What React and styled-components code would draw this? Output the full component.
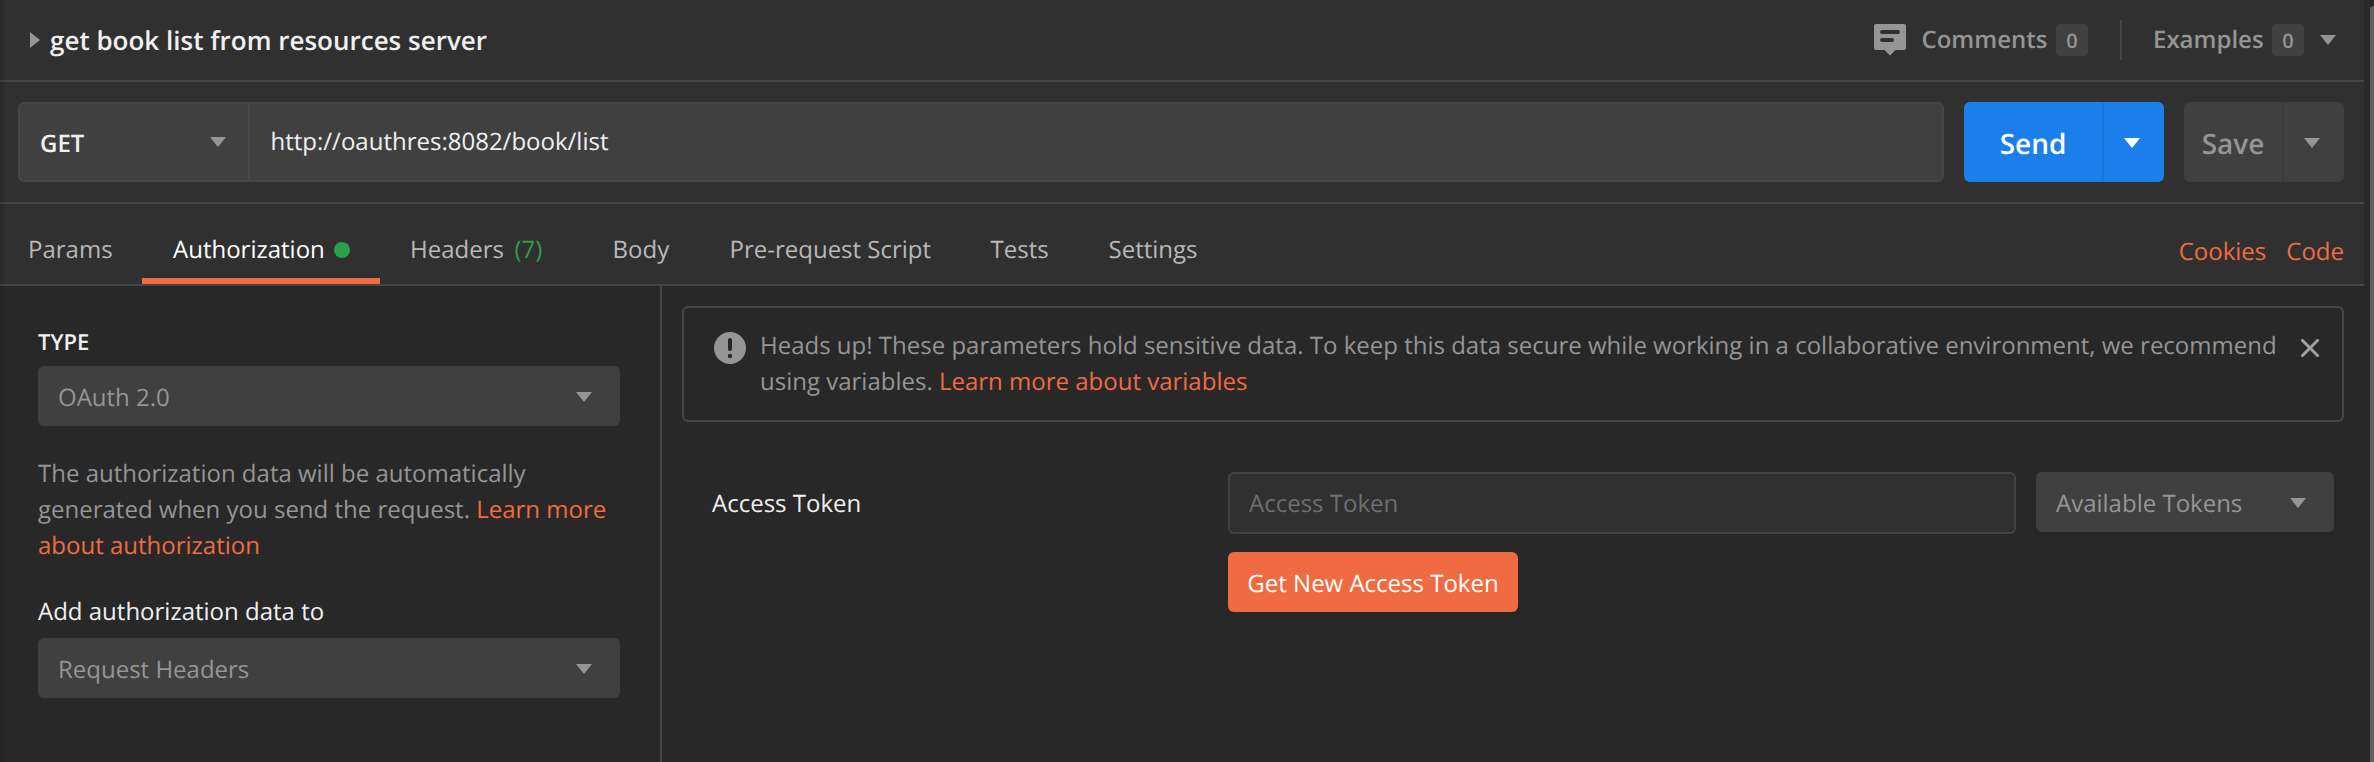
import React from 'react';
import styled, { createGlobalStyle } from 'styled-components';

const c = {
  body: '#282828',
  bar: '#303030',
  line: '#464646',
  fill: '#404040',
  orange: '#f16b42',
  blue: '#1b7feb',
  green: '#2c9d4a',
  muted: '#959595',
  tab: '#b8b8b8',
  text: '#f0f0f0',
};

const GlobalStyle = createGlobalStyle`
  *, *::before, *::after { box-sizing: border-box; }
  body {
    margin: 0;
    background: ${c.body};
    font-family: "Open Sans", "Noto Sans", sans-serif;
    font-size: 24px;
    line-height: 36px;
    color: ${c.text};
    text-rendering: geometricPrecision;
    -webkit-font-smoothing: antialiased;
    overflow: hidden;
  }
  button, input { font: inherit; text-rendering: inherit; }
`;

const Page = styled.div`
  display: flex;
  width: 2374px;
  height: 762px;
  background: ${c.body};
`;

const Main = styled.main`
  position: relative;
  display: flex;
  flex-direction: column;
  width: 2364px;
  height: 762px;

  &::after {
    content: '';
    position: absolute;
    inset: 0 auto 0 0;
    width: 8px;
    background: linear-gradient(to right, rgba(0, 0, 0, 0.14), rgba(0, 0, 0, 0));
  }
`;

const Scrollbar = styled.div`
  width: 4px;
  margin: 6px 0 0 6px;
  background: #5f5f5f;
  border-top-left-radius: 6px;
`;

const Bar = styled.div`
  display: flex;
  flex: none;
  align-items: center;
  height: ${(p) => p.$height}px;
  padding: 0 20px 0 ${(p) => p.$left}px;
  background: ${c.bar};
  border-bottom: 2px solid ${c.line};
`;

const Title = styled.h1`
  flex: 1;
  margin: 0 0 0 10px;
  font-size: 26px;
  font-weight: 600;
  line-height: 36px;
`;

const Meta = styled.div`
  display: flex;
  align-items: center;
  color: ${c.muted};
  font-weight: 600;
`;

const MetaLabel = styled.span`
  width: ${(p) => p.$width}px;
  margin-left: ${(p) => p.$left || 0}px;
  white-space: nowrap;
`;

const Badge = styled.span`
  width: 32px;
  height: 32px;
  border-radius: 4px;
  background: ${c.fill};
  font-size: 20px;
  line-height: 33px;
  font-weight: 600;
  text-align: center;
`;

const Divider = styled.span`
  width: 2px;
  height: 40px;
  margin: 0 31px 0 32px;
  background: ${c.line};
`;

const CaretSvg = styled.svg`
  display: block;
  flex: none;
  fill: ${(p) => p.$color || c.muted};
  margin-left: ${(p) => p.$left || 0}px;
  margin-right: ${(p) => p.$right || 0}px;
`;

const Caret = (props) => (
  <CaretSvg width="16" height="10" viewBox="0 0 16 10" {...props}>
    <path d="M0 0H16L8 10Z" />
  </CaretSvg>
);

const UrlBox = styled.div`
  display: flex;
  width: 1926px;
  height: 80px;
  border: 2px solid ${c.line};
  border-radius: 6px;
  background: ${c.fill};
`;

const Method = styled.div`
  display: flex;
  align-items: center;
  justify-content: space-between;
  width: 230px;
  padding: 3px 22px 0 20px;
  border-right: 2px solid #474747;
  font-weight: 600;

  svg { margin-top: -3px; }
`;

const Url = styled.div`
  flex: 1;
  padding: 20px 20.5px 0;
`;

const Split = styled.div`
  display: flex;
  width: ${(p) => p.$width}px;
  height: 80px;
  margin-left: 20px;
  border-radius: 6px;
  overflow: hidden;
  background: ${(p) => (p.$primary ? c.blue : c.fill)};
  color: ${(p) => (p.$primary ? '#fff' : c.muted)};
`;

const SplitMain = styled.button`
  flex: 1;
  padding: 3px 0 0;
  border: 0;
  border-right: 2px solid ${(p) => (p.$primary ? '#1a76d8' : '#3b3b3b')};
  background: none;
  color: inherit;
  font-size: 28px;
  font-weight: 600;
`;

const SplitMore = styled.button`
  display: flex;
  align-items: center;
  justify-content: center;
  width: 60px;
  padding: 2px 4px 0 0;
  border: 0;
  background: none;
`;

const Tabs = styled.nav`
  display: flex;
  flex: 1;
  align-self: stretch;
`;

const Tab = styled.div`
  display: flex;
  align-items: center;
  padding: 18px 0 0 ${(p) => p.$left || 30.5}px;
  width: ${(p) => p.$width}px;
  color: ${(p) => (p.$active ? '#fff' : c.tab)};
  border-bottom: 6px solid ${(p) => (p.$active ? c.orange : 'transparent')};
  white-space: nowrap;
`;

const Dot = styled.i`
  width: 16px;
  height: 16px;
  margin-left: 9.5px;
  border-radius: 50%;
  background: ${c.green};
`;

const Count = styled.span`
  margin-left: 10.5px;
  color: ${c.green};
`;

const Link = styled.a`
  color: ${c.orange};
  margin-left: ${(p) => p.$left || 0}px;
`;

const TabLinks = styled.div`
  padding-top: 16px;
`;

const Body = styled.div`
  display: flex;
  flex: 1;
`;

const Side = styled.aside`
  width: 662px;
  padding: 38px 40px 0 38px;
  border-right: 2px solid ${c.line};
`;

const FieldTitle = styled.div`
  height: ${(p) => (p.$caps ? 42 : 44)}px;
  font-size: ${(p) => (p.$caps ? 22 : 24)}px;
  font-weight: ${(p) => (p.$caps ? 600 : 400)};
`;

const Select = styled.div`
  display: flex;
  align-items: center;
  justify-content: space-between;
  width: ${(p) => p.$width}px;
  height: 60px;
  padding: 4px 28px 0 20px;
  border-radius: 6px;
  background: ${c.fill};
  color: ${c.muted};

  svg { margin-bottom: 2px; }
`;

const Note = styled.p`
  margin: 30px 0;
  color: ${c.muted};
`;

const Content = styled.section`
  flex: 1;
  padding: 20px;
`;

const Alert = styled.div`
  display: flex;
  height: 116px;
  padding: 18px 23px 0 30px;
  border: 2px solid ${c.line};
  border-radius: 6px;
  color: ${c.muted};

  svg { flex: none; }
`;

const AlertText = styled.p`
  flex: 1;
  margin: 2px 20px 0 14px;
`;

const AlertIcon = styled.svg`
  margin-top: 6px;
`;

const CloseIcon = styled.svg`
  margin-top: 13px;
`;

const TokenRow = styled.div`
  display: flex;
  margin-top: 50px;
  padding-left: 30px;
`;

const TokenLabel = styled.label`
  width: 516px;
  padding-top: 14px;
`;

const TokenFields = styled.div`
  width: 788px;
  margin-right: 20px;
`;

const TokenInput = styled.input`
  display: block;
  width: 788px;
  height: 62px;
  padding: 0 19px;
  border: 2px solid #434343;
  border-radius: 6px;
  background: ${c.bar};
  color: ${c.text};
  outline: none;

  &::placeholder { color: #6e6e6e; opacity: 1; }
`;

const TokenButton = styled.button`
  width: 290px;
  height: 60px;
  margin-top: 18px;
  padding: 4px 0 0;
  border: 0;
  border-radius: 6px;
  background: ${c.orange};
  color: #fff;
  white-space: nowrap;
`;

export default function App() {
  return (
    <Page>
      <GlobalStyle />
      <Main>
        <Bar $height={82} $left={30}>
          <svg width="10" height="16" viewBox="0 0 10 16"><path d="M0 0L10 8L0 16Z" fill={c.muted} /></svg>
          <Title>get book list from resources server</Title>
          <Meta>
            <svg width="32" height="32" viewBox="0 0 32 32">
              <path d="M2 0H30Q32 0 32 2V24Q32 26 30 26H21.5L16 31.5L10.500 26H2Q0 26 0 24V2Q0 0 2 0Z" fill={c.muted} />
              <path d="M8 8H24M8 16H18" stroke={c.bar} strokeWidth="4" strokeLinecap="round" />
            </svg>
            <MetaLabel $left={15.5} $width={134.5}>Comments</MetaLabel>
            <Badge>0</Badge>
            <Divider />
            <MetaLabel $width={119}>Examples</MetaLabel>
            <Badge>0</Badge>
            <Caret $left={16} $right={8} />
          </Meta>
        </Bar>
        <Bar $height={122} $left={18}>
          <UrlBox>
            <Method>GET<Caret /></Method>
            <Url>http://oauthres:8082/book/list</Url>
          </UrlBox>
          <Split $primary $width={200}>
            <SplitMain $primary>Send</SplitMain>
            <SplitMore><Caret $color="#fff" /></SplitMore>
          </Split>
          <Split $width={160}>
            <SplitMain>Save</SplitMain>
            <SplitMore><Caret /></SplitMore>
          </Split>
        </Bar>
        <Bar $height={82} $left={0}>
          <Tabs>
            <Tab $left={28} $width={142}>Params</Tab>
            <Tab $active $left={31} $width={238}>Authorization<Dot /></Tab>
            <Tab $left={30} $width={202}>Headers<Count>(7)</Count></Tab>
            <Tab $width={117}>Body</Tab>
            <Tab $width={261}>Pre-request Script</Tab>
            <Tab $width={118}>Tests</Tab>
            <Tab $width={150}>Settings</Tab>
          </Tabs>
          <TabLinks>
            <Link>Cookies</Link>
            <Link $left={20}>Code</Link>
          </TabLinks>
        </Bar>
        <Body>
          <Side>
            <FieldTitle $caps>TYPE</FieldTitle>
            <Select $width={582}>OAuth 2.0<Caret /></Select>
            <Note>
              The authorization data will be automatically generated when you send the request.{' '}
              <Link>Learn more about authorization</Link>
            </Note>
            <FieldTitle>Add authorization data to</FieldTitle>
            <Select $width={582}>Request Headers<Caret /></Select>
          </Side>
          <Content>
            <Alert>
              <AlertIcon width="32" height="32" viewBox="0 0 32 32">
                <circle cx="16" cy="16" r="16" fill={c.muted} />
                <path d="M16 8V17" stroke={c.body} strokeWidth="4" strokeLinecap="round" />
                <circle cx="16" cy="24" r="2.200" fill={c.body} />
              </AlertIcon>
              <AlertText>
                Heads up! These parameters hold sensitive data. To keep this data secure while working in a
                collaborative environment, we recommend using variables. <Link>Learn more about variables</Link>
              </AlertText>
              <CloseIcon width="18" height="18" viewBox="0 0 18 18">
                <path d="M1.500 1.500L16.500 16.500M16.500 1.500L1.500 16.500" stroke="#a0a0a0" strokeWidth="3" strokeLinecap="round" />
              </CloseIcon>
            </Alert>
            <TokenRow>
              <TokenLabel>Access Token</TokenLabel>
              <TokenFields>
                <TokenInput placeholder="Access Token" />
                <TokenButton>Get New Access Token</TokenButton>
              </TokenFields>
              <Select $width={298}>Available Tokens<Caret /></Select>
            </TokenRow>
          </Content>
        </Body>
      </Main>
      <Scrollbar />
    </Page>
  );
}
